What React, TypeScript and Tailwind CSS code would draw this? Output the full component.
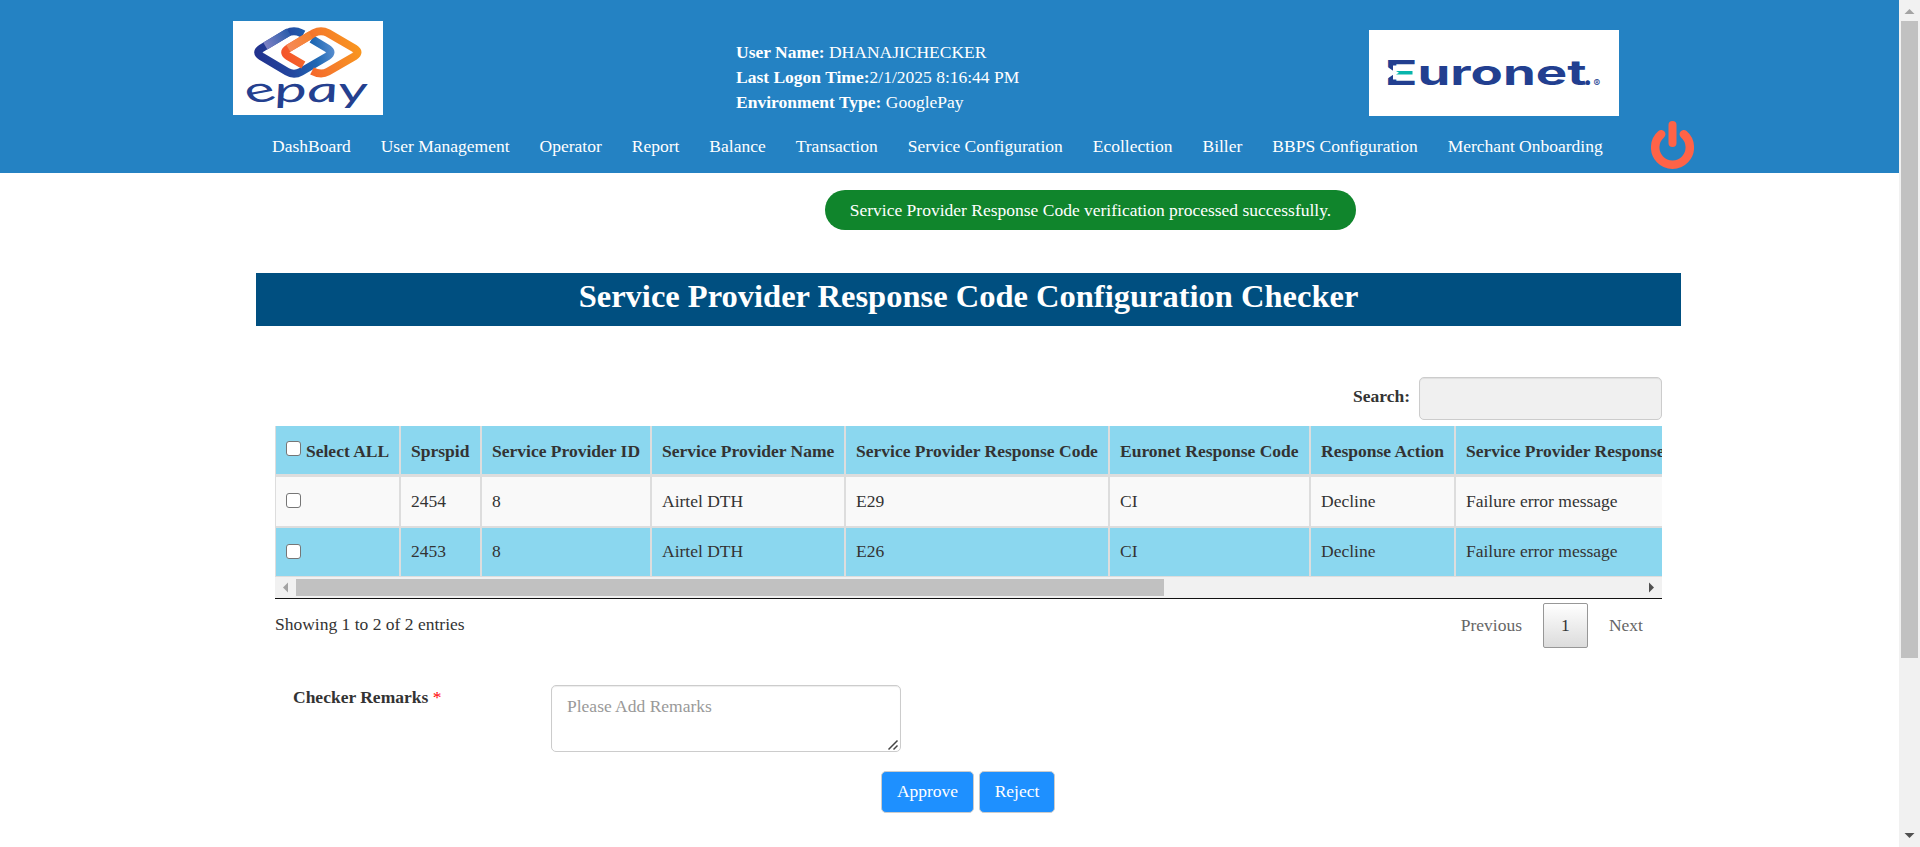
import React from "react";

const navItems = [
  "DashBoard",
  "User Management",
  "Operator",
  "Report",
  "Balance",
  "Transaction",
  "Service Configuration",
  "Ecollection",
  "Biller",
  "BBPS Configuration",
  "Merchant Onboarding",
];

const columns = [
  "Select ALL",
  "Sprspid",
  "Service Provider ID",
  "Service Provider Name",
  "Service Provider Response Code",
  "Euronet Response Code",
  "Response Action",
  "Service Provider Response Message",
];

const rows = [
  ["2454", "8", "Airtel DTH", "E29", "CI", "Decline", "Failure error message"],
  ["2453", "8", "Airtel DTH", "E26", "CI", "Decline", "Failure error message"],
];

function EpayLogo() {
  return (
    <svg viewBox="39 63 450 282" preserveAspectRatio="none" className="mt-[21px] h-[94px] w-[150px] shrink-0 bg-white">
      <defs>
        <linearGradient id="blue" gradientUnits="userSpaceOnUse" x1="102" x2="345" y1="180" y2="140">
          <stop offset="0" stopColor="#22308c" />
          <stop offset="0.45" stopColor="#2348a0" />
          <stop offset="0.75" stopColor="#1f68b4" />
          <stop offset="1" stopColor="#5a8fd0" />
        </linearGradient>
        <linearGradient id="orange" gradientUnits="userSpaceOnUse" x1="190" x2="425" y1="200" y2="120">
          <stop offset="0" stopColor="#f4502a" />
          <stop offset="0.5" stopColor="#f5792c" />
          <stop offset="1" stopColor="#f9991c" />
        </linearGradient>
        <linearGradient id="blueShine" gradientUnits="userSpaceOnUse" x1="136" x2="215" y1="137" y2="92">
          <stop offset="0" stopColor="#7d80c4" />
          <stop offset="1" stopColor="#2259a8" />
        </linearGradient>
        <linearGradient id="orangeShine" gradientUnits="userSpaceOnUse" x1="200" x2="270" y1="150" y2="105">
          <stop offset="0" stopColor="#f68a5c" />
          <stop offset="1" stopColor="#f5822e" />
        </linearGradient>
      </defs>
      <g fill="none" strokeWidth="24">
        <path
          stroke="url(#blue)"
          d="M250 103 L243 99 Q222 88 201 99 L124 145 Q105 157 124 169 L201 215 Q222 227 243 215 L322 169 Q341 157 322 145 L275 117"
        />
        <path stroke="url(#blueShine)" d="M136 138 L206 96" />
        <path
          stroke="url(#orange)"
          d="M250 195 L205 169 Q186 157 205 145 L282 99 Q303 88 324 99 L403 145 Q422 157 403 169 L324 215 Q303 227 276 213"
        />
        <path stroke="url(#orangeShine)" d="M205 145 L272 105" />
      </g>
      <g fill="#24408f" fontFamily="Lato, sans-serif" fontSize="106">
        <text transform="translate(75 307) scale(1.62 1) rotate(-16 25 -27)">e</text>
        <text transform="translate(168 307) skewX(9) scale(1.62 1)" fontStyle="italic" textLength="173" lengthAdjust="spacingAndGlyphs">
          pay
        </text>
      </g>
    </svg>
  );
}

function EuronetLogo() {
  return (
    <svg viewBox="0 0 250 86" className="mt-[30px] h-[86px] w-[250px] shrink-0 bg-white">
      <g fill="#223f90" fontFamily="Inter, sans-serif">
        <text x="15.500" y="55" fontSize="34" fontWeight="700" textLength="33" lengthAdjust="spacingAndGlyphs">
          E
        </text>
        <text x="48.500" y="55" fontSize="34" fontWeight="700" textLength="169" lengthAdjust="spacingAndGlyphs">
          uronet
        </text>
        <text x="214" y="55" fontSize="28" fontWeight="700">
          .
        </text>
        <text x="224.500" y="57" fontSize="10" fontWeight="500">
          ®
        </text>
      </g>
      <path fill="#fff" d="M15 34.500 L27 42.700 L15 51 Z M24 35.500 H49 V49.500 H24 Z" />
      <path fill="#08b5ac" d="M27 41 H43.500 V44.500 H27 L30 42.700 Z" />
    </svg>
  );
}

function PowerIcon() {
  return (
    <svg viewBox="0 0 43 48" className="h-12 w-[43px] shrink-0" fill="none" stroke="#ff6347" strokeLinecap="round">
      <path strokeWidth="8" d="M21.500 4 V22" />
      <path strokeWidth="8.500" d="M10.200 13.300 A17.300 17.300 0 1 0 32.800 13.300" />
    </svg>
  );
}

function Checkbox() {
  return (
    <input
      type="checkbox"
      className="block size-[15px] shrink-0 appearance-none rounded-[3px] border border-[#767676] bg-white"
    />
  );
}

function VerticalScrollbar() {
  return (
    <div className="flex h-[847px] w-[21px] shrink-0 flex-col items-center bg-[#f1f1f1]">
      <svg viewBox="0 0 21 21" className="h-[21px] w-[21px] shrink-0">
        <path fill="#a3a3a3" d="M5.500 14 L10.500 9 L15.500 14 Z" />
      </svg>
      <div className="h-[637px] w-[17px] bg-[#c1c1c1]" />
      <svg viewBox="0 0 21 21" className="mt-auto h-[21px] w-[21px] shrink-0">
        <path fill="#505050" d="M5.500 7 L10.500 12 L15.500 7 Z" />
      </svg>
    </div>
  );
}

export default function App() {
  return (
    <div className="flex h-[847px] w-[1920px] overflow-hidden bg-white font-['Liberation_Serif',serif] text-[17.5px] leading-[25px] text-[#333]">
      <div className="flex h-full w-[1899px] flex-col">
        <header className="h-[173px] shrink-0 bg-[#2482c3] text-white">
          <div className="flex h-[116px] items-start pl-[233px]">
            <EpayLogo />
            <div className="mt-[40px] ml-[353px] w-[633px] shrink-0">
              <div><b>User Name:</b> DHANAJICHECKER</div>
              <div><b>Last Logon Time:</b>2/1/2025 8:16:44 PM</div>
              <div><b>Environment Type:</b> GooglePay</div>
            </div>
            <EuronetLogo />
          </div>
          <nav className="flex items-start pt-[5px] pl-[272px]">
            <div className="mt-[13px] flex w-[1379px] shrink-0 gap-[30px] whitespace-nowrap">
              {navItems.map((item) => (
                <a key={item}>{item}</a>
              ))}
            </div>
            <PowerIcon />
          </nav>
        </header>

        <main className="flex w-[1681px] flex-col pl-[256px]">
          <div className="mt-[17px] ml-[569px] flex h-10 w-[531px] items-center justify-center rounded-[20px] bg-[#10852c] whitespace-nowrap text-white">
            Service Provider Response Code verification processed successfully.
          </div>
          <h1 className="mt-[43px] h-[53px] bg-[#004f80] pt-[6px] text-center text-[32.5px] leading-[35px] font-bold text-white">
            Service Provider Response Code Configuration Checker
          </h1>

          <section className="mx-[19px] mt-[51px] w-[1387px]">
            <div className="flex h-[49px] items-start justify-end">
              <label className="mt-[7px] mr-[9px] font-bold">Search:</label>
              <input className="h-[43px] w-[243px] rounded-[5px] border border-[#ccc] bg-[#f0f0f0] shadow-[inset_0_1px_1px_rgba(0,0,0,0.075)]" />
            </div>
            <div className="overflow-hidden">
              <table className="w-[1600px] table-fixed border-separate border-spacing-0 whitespace-nowrap">
                <colgroup>
                  <col className="w-[125px]" />
                  <col className="w-[81px]" />
                  <col className="w-[170px]" />
                  <col className="w-[194px]" />
                  <col className="w-[264px]" />
                  <col className="w-[201px]" />
                  <col className="w-[145px]" />
                  <col className="w-[420px]" />
                </colgroup>
                <thead>
                  <tr className="h-[50px] bg-[#8bd7ef]">
                    {columns.map((name, i) => (
                      <th key={name} className="border-x border-b-2 border-[#ddd] p-0 pt-[2px] pl-[10px] text-left font-bold">
                        {i === 0 ? (
                          <div className="flex items-center gap-[5px]">
                            <div className="-mt-[6px]"><Checkbox /></div>
                            <span>{name}</span>
                          </div>
                        ) : (
                          name
                        )}
                      </th>
                    ))}
                  </tr>
                </thead>
                <tbody>
                  {rows.map((row, r) => (
                    <tr key={row[0]} className={r === 0 ? "h-[51px] bg-[#f9f9f9]" : "h-[50px] bg-[#8bd7ef]"}>
                      <td className="border border-[#ddd] p-0 pb-[2px] pl-[10px]">
                        <Checkbox />
                      </td>
                      {row.map((cell, i) => (
                        <td
                          key={i}
                          className={r === 0 ? "border border-[#ddd] p-0 pl-[10px]" : "border border-[#ddd] p-0 pb-[2px] pl-[10px]"}
                        >
                          {cell}
                        </td>
                      ))}
                    </tr>
                  ))}
                </tbody>
              </table>
            </div>
            <div className="flex h-[22px] items-center border-b border-[#111] bg-[#f1f1f1]">
              <svg viewBox="0 0 21 21" className="size-[21px] shrink-0">
                <path fill="#a3a3a3" d="M13 5.500 L8 10.500 L13 15.500 Z" />
              </svg>
              <div className="h-[17px] w-[868px] bg-[#c1c1c1]" />
              <svg viewBox="0 0 21 21" className="ml-auto size-[21px] shrink-0">
                <path fill="#505050" d="M8 5.500 L13 10.500 L8 15.500 Z" />
              </svg>
            </div>
            <div className="flex items-start pt-1">
              <div className="mt-[9px]">Showing 1 to 2 of 2 entries</div>
              <div className="mr-[19px] ml-auto flex items-center text-[#666]">
                <span>Previous</span>
                <span className="mx-[21px] flex h-[45px] w-[45px] items-center justify-center rounded-[2px] border border-[#979797] bg-gradient-to-b from-white to-[#dcdcdc] text-[#333]">
                  1
                </span>
                <span>Next</span>
              </div>
            </div>
          </section>

          <section className="mt-[37px] flex items-start pl-[37px]">
            <div className="w-[258px] font-bold">
              Checker Remarks <span className="font-normal text-[#ff0000]">*</span>
            </div>
            <div className="relative h-[67px] w-[350px]">
              <textarea
                placeholder="Please Add Remarks"
                className="block h-[67px] w-[350px] resize-none rounded-[5px] border border-[#ccc] px-[15px] py-[8px] shadow-[inset_0_1px_1px_rgba(0,0,0,0.075)] placeholder:text-[#999]"
              />
              <svg viewBox="0 0 12 12" className="absolute right-[2px] bottom-[1px] size-3" stroke="#444" strokeWidth="1.500">
                <path d="M1.500 10.500 L10.500 1.500 M6.500 10.500 L10.500 6.500" />
              </svg>
            </div>
          </section>
          <div className="mt-[19px] ml-[625px] flex gap-[5px] text-white">
            <button className="h-[42px] w-[93px] rounded-[5px] border border-[#ccc] bg-[#1e90ff] pb-[2px]">Approve</button>
            <button className="h-[42px] w-[76px] rounded-[5px] border border-[#ccc] bg-[#1e90ff] pb-[2px]">Reject</button>
          </div>
        </main>
      </div>
      <VerticalScrollbar />
    </div>
  );
}
